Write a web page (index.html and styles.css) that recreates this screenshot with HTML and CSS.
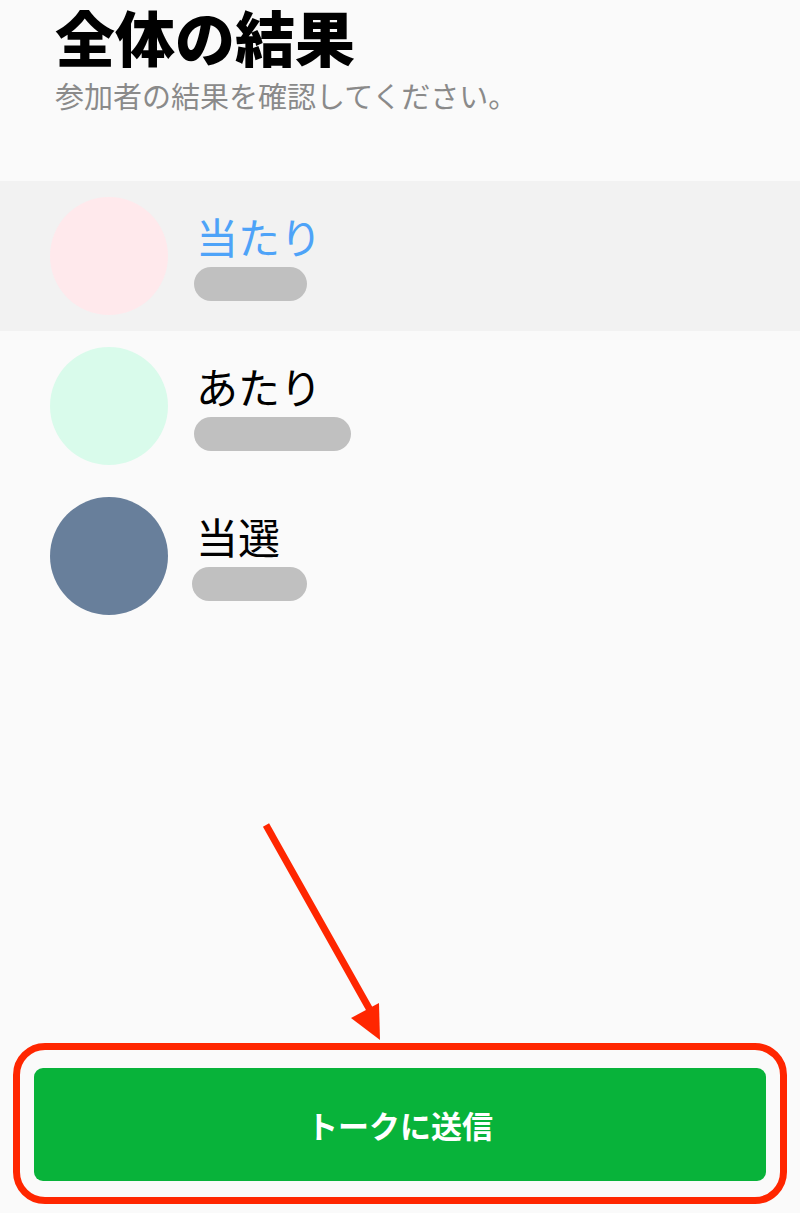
FILE: index.html
```html
<!DOCTYPE html>
<html lang="ja">
<head>
<meta charset="utf-8">
<title>全体の結果</title>
<link rel="stylesheet" href="styles.css">
</head>
<body>
<div class="page">
  <header class="header">
    <h1 class="title">全体の結果</h1>
    <p class="subtitle">参加者の結果を確認してください。</p>
  </header>
  <ul class="list">
    <li class="row row-active">
      <span class="avatar avatar-pink"></span>
      <div class="info">
        <span class="name name-blue">当たり</span>
        <span class="pill" style="width:113px"></span>
      </div>
    </li>
    <li class="row">
      <span class="avatar avatar-mint"></span>
      <div class="info">
        <span class="name">あたり</span>
        <span class="pill" style="width:157px"></span>
      </div>
    </li>
    <li class="row">
      <span class="avatar avatar-slate"></span>
      <div class="info">
        <span class="name">当選</span>
        <span class="pill pill-shift" style="width:115px"></span>
      </div>
    </li>
  </ul>
  <footer class="footer">
    <button class="send-btn">トークに送信</button>
  </footer>
  <div class="highlight"></div>
  <svg class="arrow" width="800" height="1213" viewBox="0 0 800 1213">
    <line x1="266" y1="825" x2="370" y2="1010" stroke="#ff2600" stroke-width="7"/>
    <polygon points="351,1018 379,1003 380,1040" fill="#ff2600"/>
  </svg>
</div>
</body>
</html>
```

FILE: styles.css
```css
* { box-sizing: border-box; }
html, body {
  margin: 0;
  padding: 0;
  background: #fafafa;
}
body {
  font-family: "Noto Sans CJK JP", "Noto Sans", sans-serif;
  color: #000;
}
.page {
  position: relative;
  display: flex;
  flex-direction: column;
  height: 1213px;
  overflow: hidden;
}
.header {
  padding: 0 55px;
}
.title {
  margin: 0;
  font-size: 60px;
  line-height: 72px;
  font-weight: 900;
  letter-spacing: 0;
}
.subtitle {
  margin: 4px 0 0;
  font-size: 29px;
  line-height: 38px;
  color: #8a8a8a;
  letter-spacing: 0;
}
.list {
  list-style: none;
  margin: 67px 0 0;
  padding: 0;
}
.row {
  display: flex;
  align-items: center;
  height: 150px;
  padding-left: 50px;
  gap: 28px;
}
.row-active {
  background: #f2f2f2;
}
.avatar {
  width: 118px;
  height: 118px;
  border-radius: 50%;
  flex: none;
}
.avatar-pink { background: #ffe9ec; }
.avatar-mint { background: #d9fbeb; }
.avatar-slate { background: #687f9b; }
.info {
  display: flex;
  flex-direction: column;
  align-items: flex-start;
}
.name {
  font-size: 42px;
  line-height: 48px;
  color: #000;
}
.name-blue {
  color: #4ea3f8;
}
.pill {
  display: block;
  height: 34px;
  margin-top: 7px;
  margin-left: -2px;
  border-radius: 17px;
  background: #c0c0c0;
}
.pill-shift {
  margin-left: -4px;
}
.footer {
  margin-top: auto;
  padding: 0 34px 32px;
}
.send-btn {
  display: block;
  width: 100%;
  height: 113px;
  border: none;
  border-radius: 9px;
  background: #08b33a;
  color: #fff;
  font-family: "Noto Sans CJK JP", "Noto Sans", sans-serif;
  font-size: 31px;
  font-weight: 700;
  letter-spacing: 0;
}
.highlight {
  position: absolute;
  left: 13px;
  top: 1043px;
  width: 774px;
  height: 161px;
  border: 7px solid #ff2600;
  border-radius: 32px;
}
.arrow {
  position: absolute;
  left: 0;
  top: 0;
  pointer-events: none;
}
```
